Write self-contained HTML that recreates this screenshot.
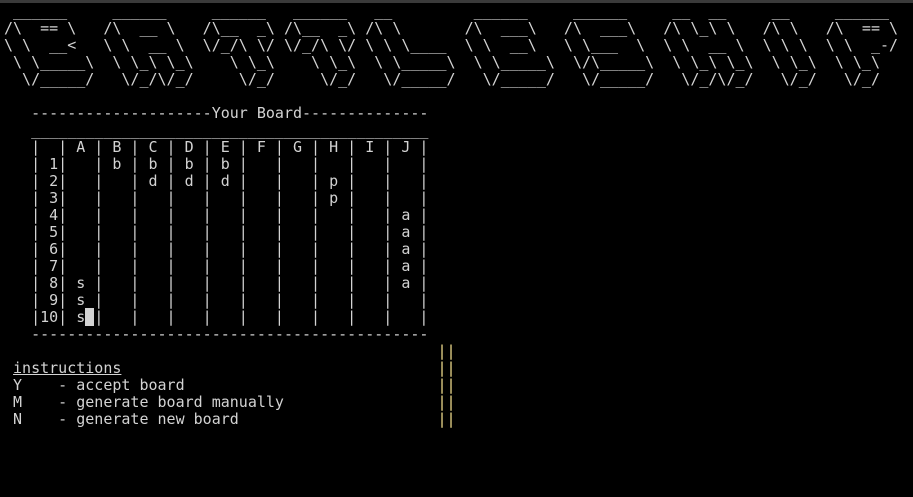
<!DOCTYPE html>
<html><head><meta charset="utf-8"><style>
html,body{margin:0;padding:0;background:#000;}
body{width:913px;height:497px;overflow:hidden;position:relative;}
.top{position:absolute;left:0;top:0;width:913px;height:3px;background:#3a3a3a;}
pre{position:absolute;left:4px;top:3px;margin:0;font-family:"DejaVu Sans Mono","Liberation Mono",monospace;font-size:15px;line-height:17px;color:#d3d3d3;white-space:pre;}
.y{color:#ecd98a;}
.u{text-decoration:underline;}
.cur{background:#d3d3d3;color:#000;}
</style></head><body><div class="top"></div>
<pre> ______     ______     ______   ______   __         ______     ______     __  __     __     ______  
/\  == \   /\  __ \   /\__  _\ /\__  _\ /\ \       /\  ___\   /\  ___\   /\ \_\ \   /\ \   /\  == \ 
\ \  __&lt;   \ \  __ \  \/_/\ \/ \/_/\ \/ \ \ \____  \ \  __\   \ \___  \  \ \  __ \  \ \ \  \ \  _-/ 
 \ \_____\  \ \_\ \_\    \ \_\    \ \_\  \ \_____\  \ \_____\  \/\_____\  \ \_\ \_\  \ \_\  \ \_\   
  \/_____/   \/_/\/_/     \/_/     \/_/   \/_____/   \/_____/   \/_____/   \/_/\/_/   \/_/   \/_/   

   --------------------Your Board--------------
   ____________________________________________
   |  | A | B | C | D | E | F | G | H | I | J |
   | 1|   | b | b | b | b |   |   |   |   |   |
   | 2|   |   | d | d | d |   |   | p |   |   |
   | 3|   |   |   |   |   |   |   | p |   |   |
   | 4|   |   |   |   |   |   |   |   |   | a |
   | 5|   |   |   |   |   |   |   |   |   | a |
   | 6|   |   |   |   |   |   |   |   |   | a |
   | 7|   |   |   |   |   |   |   |   |   | a |
   | 8| s |   |   |   |   |   |   |   |   | a |
   | 9| s |   |   |   |   |   |   |   |   |   |
   |10| s<span class="cur"> </span>|   |   |   |   |   |   |   |   |   |
   --------------------------------------------
                                                <span class="y">||</span>
 <span class="u">instructions</span>                                   <span class="y">||</span>
 Y    - accept board                            <span class="y">||</span>
 M    - generate board manually                 <span class="y">||</span>
 N    - generate new board                      <span class="y">||</span></pre>
</body></html>
